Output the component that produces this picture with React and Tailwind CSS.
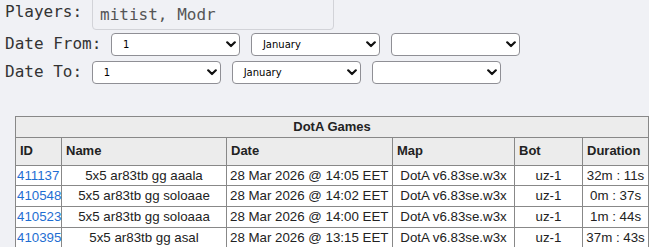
import React from 'react';

const games = [
  { id: '411137', name: '5x5 ar83tb gg aaala', date: '28 Mar 2026 @ 14:05 EET', map: 'DotA v6.83se.w3x', bot: 'uz-1', duration: '32m : 11s' },
  { id: '410548', name: '5x5 ar83tb gg soloaae', date: '28 Mar 2026 @ 14:02 EET', map: 'DotA v6.83se.w3x', bot: 'uz-1', duration: '0m : 37s' },
  { id: '410523', name: '5x5 ar83tb gg soloaaa', date: '28 Mar 2026 @ 14:00 EET', map: 'DotA v6.83se.w3x', bot: 'uz-1', duration: '1m : 44s' },
  { id: '410395', name: '5x5 ar83tb gg asal', date: '28 Mar 2026 @ 13:15 EET', map: 'DotA v6.83se.w3x', bot: 'uz-1', duration: '37m : 43s' },
];

const Chevron = () => (
  <svg width="10" height="7" viewBox="0 0 10 7" className="shrink-0">
    <path d="M1.2 1.3 L5 5 L8.8 1.3" fill="none" stroke="#111" strokeWidth="2.2" strokeLinecap="round" strokeLinejoin="round" />
  </svg>
);

const FakeSelect = ({ value, className = '' }) => (
  <div className={`flex items-center justify-between w-[129px] h-[23px] bg-white border border-[#8f8f95] rounded-[4px] pl-[11px] pr-[3px] ${className}`}>
    <span className="text-[10px] text-black font-['DejaVu_Sans',sans-serif]">{value}</span>
    <Chevron />
  </div>
);

const DateRow = ({ label, className = '' }) => (
  <div className={`flex items-center ${className}`}>
    <span className="whitespace-pre">{label}</span>
    <FakeSelect value="1" className="ml-[9.6px]" />
    <FakeSelect value="January" className="ml-[11px]" />
    <FakeSelect value="" className="ml-[11px]" />
  </div>
);

export default function App() {
  return (
    <div className="min-h-screen bg-[#f0f1f5] overflow-hidden">
      <div className="pl-[5px] text-[16px] text-[#333] font-['DejaVu_Sans_Mono',monospace]">
        <div className="flex items-center -mt-[6px]">
          <span>Players:</span>
          <div className="ml-[10px] w-[242px] h-[36px] border border-[#d2d3d8] rounded-[4px] flex items-center pl-[7px] pt-[6px] text-[#555]">
            mitist, Modr
          </div>
        </div>
        <DateRow label="Date From:" className="mt-[2px]" />
        <DateRow label="Date To:" className="mt-[4px]" />
      </div>

      <table className="mt-[32px] ml-[15px] w-[633px] table-fixed border-collapse text-[13.3px] text-[#222] font-['Liberation_Sans',Arial,sans-serif]">
        <colgroup>
          <col className="w-[46px]" />
          <col className="w-[165px]" />
          <col className="w-[166px]" />
          <col className="w-[122px]" />
          <col className="w-[68px]" />
          <col className="w-[66px]" />
        </colgroup>
        <thead className="text-[13px]">
          <tr className="h-[20px] bg-[#ececec]">
            <th colSpan={6} className="border border-[#888] p-0 font-bold text-center">DotA Games</th>
          </tr>
          <tr className="h-[28px] bg-[#ececec]">
            <th className="border border-[#888] px-[4px] py-0 text-left font-bold">ID</th>
            <th className="border border-[#888] px-[4px] py-0 text-left font-bold">Name</th>
            <th className="border border-[#888] px-[4px] py-0 text-left font-bold">Date</th>
            <th className="border border-[#888] px-[4px] py-0 text-left font-bold">Map</th>
            <th className="border border-[#888] px-[4px] py-0 text-left font-bold">Bot</th>
            <th className="border border-[#888] px-[4px] py-0 text-left font-bold">Duration</th>
          </tr>
        </thead>
        <tbody>
          {games.map((g) => (
            <tr key={g.id} className="h-[20px] bg-white">
              <td className="border border-[#888] px-[1px] py-0">
                <a href="#" className="text-[#1e6ed2]">{g.id}</a>
              </td>
              <td className="border border-[#888] px-[3px] py-0 text-center whitespace-nowrap">{g.name}</td>
              <td className="border border-[#888] px-[3px] py-0 whitespace-nowrap">{g.date}</td>
              <td className="border border-[#888] px-[3px] py-0 text-center whitespace-nowrap">{g.map}</td>
              <td className="border border-[#888] px-[3px] py-0 text-center">{g.bot}</td>
              <td className="border border-[#888] px-[3px] py-0 text-center whitespace-nowrap">{g.duration}</td>
            </tr>
          ))}
        </tbody>
      </table>
    </div>
  );
}
